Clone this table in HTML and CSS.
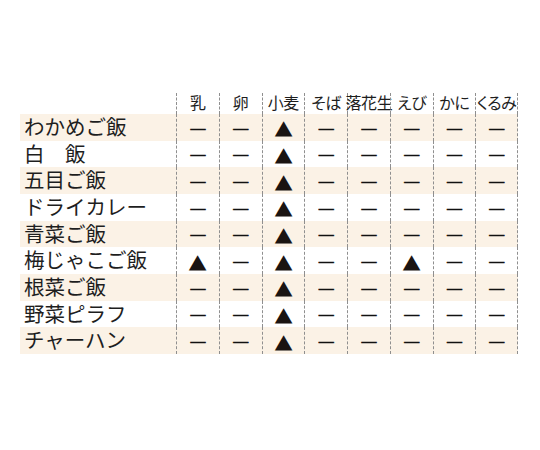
FILE: index.html
```html
<!DOCTYPE html>
<html lang="ja">
<head>
<meta charset="utf-8">
<title>アレルギー表</title>
<link rel="stylesheet" href="styles.css">
</head>
<body>
<div class="table">
  <div class="row head">
    <div class="label"></div>
    <div class="cell">乳</div>
    <div class="cell">卵</div>
    <div class="cell">小麦</div>
    <div class="cell">そば</div>
    <div class="cell">落花生</div>
    <div class="cell">えび</div>
    <div class="cell">かに</div>
    <div class="cell">くるみ</div>
  </div>
  <div class="row shade">
    <div class="label">わかめご飯</div>
    <div class="cell"><span class="no">—</span></div><div class="cell"><span class="no">—</span></div><div class="cell"><span class="yes">▲</span></div><div class="cell"><span class="no">—</span></div><div class="cell"><span class="no">—</span></div><div class="cell"><span class="no">—</span></div><div class="cell"><span class="no">—</span></div><div class="cell"><span class="no">—</span></div>
  </div>
  <div class="row">
    <div class="label">白　飯</div>
    <div class="cell"><span class="no">—</span></div><div class="cell"><span class="no">—</span></div><div class="cell"><span class="yes">▲</span></div><div class="cell"><span class="no">—</span></div><div class="cell"><span class="no">—</span></div><div class="cell"><span class="no">—</span></div><div class="cell"><span class="no">—</span></div><div class="cell"><span class="no">—</span></div>
  </div>
  <div class="row shade">
    <div class="label">五目ご飯</div>
    <div class="cell"><span class="no">—</span></div><div class="cell"><span class="no">—</span></div><div class="cell"><span class="yes">▲</span></div><div class="cell"><span class="no">—</span></div><div class="cell"><span class="no">—</span></div><div class="cell"><span class="no">—</span></div><div class="cell"><span class="no">—</span></div><div class="cell"><span class="no">—</span></div>
  </div>
  <div class="row">
    <div class="label">ドライカレー</div>
    <div class="cell"><span class="no">—</span></div><div class="cell"><span class="no">—</span></div><div class="cell"><span class="yes">▲</span></div><div class="cell"><span class="no">—</span></div><div class="cell"><span class="no">—</span></div><div class="cell"><span class="no">—</span></div><div class="cell"><span class="no">—</span></div><div class="cell"><span class="no">—</span></div>
  </div>
  <div class="row shade">
    <div class="label">青菜ご飯</div>
    <div class="cell"><span class="no">—</span></div><div class="cell"><span class="no">—</span></div><div class="cell"><span class="yes">▲</span></div><div class="cell"><span class="no">—</span></div><div class="cell"><span class="no">—</span></div><div class="cell"><span class="no">—</span></div><div class="cell"><span class="no">—</span></div><div class="cell"><span class="no">—</span></div>
  </div>
  <div class="row">
    <div class="label">梅じゃこご飯</div>
    <div class="cell"><span class="yes">▲</span></div><div class="cell"><span class="no">—</span></div><div class="cell"><span class="yes">▲</span></div><div class="cell"><span class="no">—</span></div><div class="cell"><span class="no">—</span></div><div class="cell"><span class="yes">▲</span></div><div class="cell"><span class="no">—</span></div><div class="cell"><span class="no">—</span></div>
  </div>
  <div class="row shade">
    <div class="label">根菜ご飯</div>
    <div class="cell"><span class="no">—</span></div><div class="cell"><span class="no">—</span></div><div class="cell"><span class="yes">▲</span></div><div class="cell"><span class="no">—</span></div><div class="cell"><span class="no">—</span></div><div class="cell"><span class="no">—</span></div><div class="cell"><span class="no">—</span></div><div class="cell"><span class="no">—</span></div>
  </div>
  <div class="row">
    <div class="label">野菜ピラフ</div>
    <div class="cell"><span class="no">—</span></div><div class="cell"><span class="no">—</span></div><div class="cell"><span class="yes">▲</span></div><div class="cell"><span class="no">—</span></div><div class="cell"><span class="no">—</span></div><div class="cell"><span class="no">—</span></div><div class="cell"><span class="no">—</span></div><div class="cell"><span class="no">—</span></div>
  </div>
  <div class="row shade">
    <div class="label">チャーハン</div>
    <div class="cell"><span class="no">—</span></div><div class="cell"><span class="no">—</span></div><div class="cell"><span class="yes">▲</span></div><div class="cell"><span class="no">—</span></div><div class="cell"><span class="no">—</span></div><div class="cell"><span class="no">—</span></div><div class="cell"><span class="no">—</span></div><div class="cell"><span class="no">—</span></div>
  </div>
</div>
</body>
</html>
```
FILE: styles.css
```css
* { box-sizing: border-box; }
html, body { margin: 0; padding: 0; background: #ffffff; }
body {
  font-family: "Liberation Sans", "Noto Sans CJK JP", sans-serif;
  color: #1e1e1e;
}
.table {
  padding: 93px 0 0 20px;
  width: 518px;
}
.row {
  display: grid;
  grid-template-columns: 156px repeat(8, 42.75px);
  height: 26.67px;
}
.row.head { height: 21px; }
.row.shade { background: #fbf2e6; }
.label {
  display: flex;
  align-items: center;
  padding-left: 4px;
  padding-top: 2px;
  font-size: 20.5px;
  line-height: 1;
  white-space: nowrap;
}
.cell {
  display: flex;
  align-items: center;
  justify-content: center;
  border-left: 1px dashed #8f8f8f;
  line-height: 1;
}
.cell:last-child { border-right: 1px dashed #8f8f8f; }
.head .cell {
  font-size: 16px;
  white-space: nowrap;
  font-feature-settings: "palt";
  letter-spacing: -0.4px;
  padding-top: 1px;
}
.no {
  display: inline-block;
  font-family: "Liberation Sans", sans-serif;
  font-size: 15px;
  color: #111;
  -webkit-text-stroke: 0.6px #111;
}
.yes {
  display: inline-block;
  font-family: "DejaVu Sans", sans-serif;
  font-size: 20px;
  color: #1a1412;
  transform: scaleX(1.15);
}
```
